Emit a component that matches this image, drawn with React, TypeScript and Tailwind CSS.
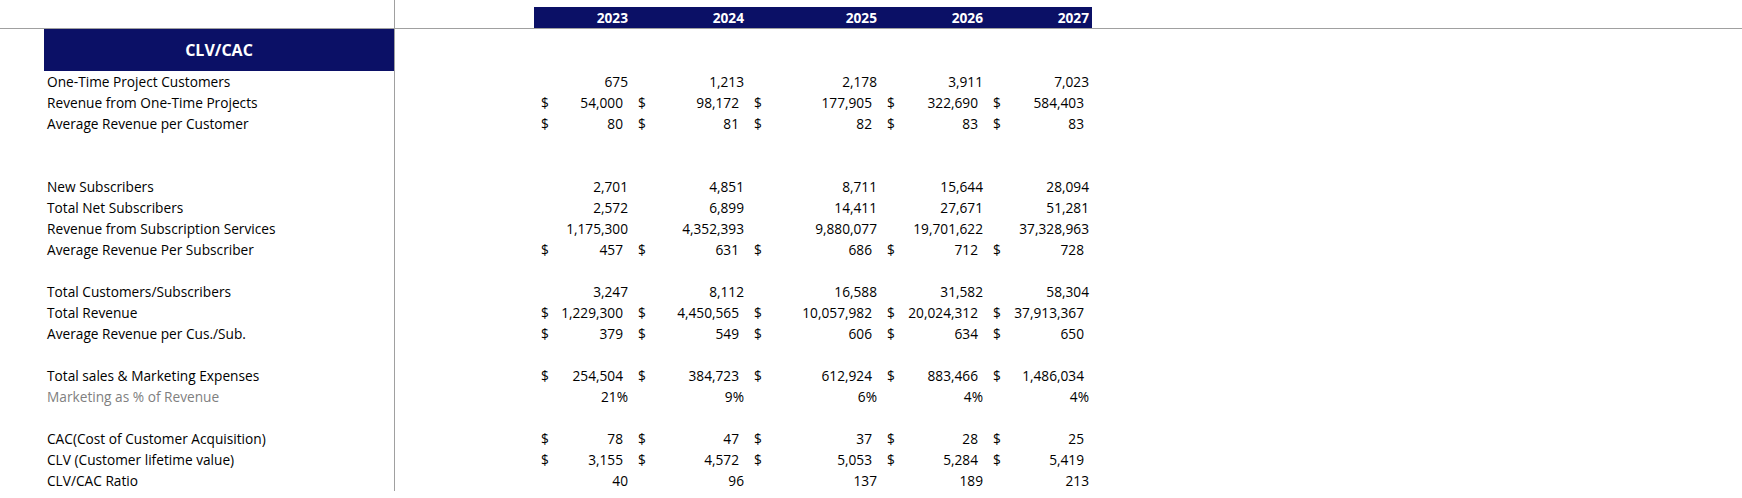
import React from 'react';

type Row = {
  label?: string;
  values?: string[];
  dollar?: boolean;
  muted?: boolean;
};

const years = ['2023', '2024', '2025', '2026', '2027'];

// widths of the five year columns, taken from the sheet
const colWidths = ['w-[97px]', 'w-[116px]', 'w-[133px]', 'w-[106px]', 'w-[106px]'];

const rows: Row[] = [
  { label: 'One-Time Project Customers', values: ['675', '1,213', '2,178', '3,911', '7,023'] },
  { label: 'Revenue from One-Time Projects', values: ['54,000', '98,172', '177,905', '322,690', '584,403'], dollar: true },
  { label: 'Average Revenue per Customer', values: ['80', '81', '82', '83', '83'], dollar: true },
  {},
  {},
  { label: 'New Subscribers', values: ['2,701', '4,851', '8,711', '15,644', '28,094'] },
  { label: 'Total Net Subscribers', values: ['2,572', '6,899', '14,411', '27,671', '51,281'] },
  { label: 'Revenue from Subscription Services', values: ['1,175,300', '4,352,393', '9,880,077', '19,701,622', '37,328,963'] },
  { label: 'Average Revenue Per Subscriber', values: ['457', '631', '686', '712', '728'], dollar: true },
  {},
  { label: 'Total Customers/Subscribers', values: ['3,247', '8,112', '16,588', '31,582', '58,304'] },
  { label: 'Total Revenue', values: ['1,229,300', '4,450,565', '10,057,982', '20,024,312', '37,913,367'], dollar: true },
  { label: 'Average Revenue per Cus./Sub.', values: ['379', '549', '606', '634', '650'], dollar: true },
  {},
  { label: 'Total sales & Marketing Expenses', values: ['254,504', '384,723', '612,924', '883,466', '1,486,034'], dollar: true },
  { label: 'Marketing as % of Revenue', values: ['21%', '9%', '6%', '4%', '4%'], muted: true },
  {},
  { label: 'CAC(Cost of Customer Acquisition)', values: ['78', '47', '37', '28', '25'], dollar: true },
  { label: 'CLV (Customer lifetime value)', values: ['3,155', '4,572', '5,053', '5,284', '5,419'], dollar: true },
  { label: 'CLV/CAC Ratio', values: ['40', '96', '137', '189', '213'] },
];

const SheetRow = ({ row }: { row: Row }) => (
  <div className="flex h-[21px] items-center">
    <div
      className={`w-[395px] h-full flex items-center border-r border-[#a0a0a0] pl-[47px] ${
        row.muted ? 'text-[#7f7f7f]' : 'text-black'
      }`}
    >
      {row.label}
    </div>
    <div className="w-[139px]" />
    {row.values?.map((v, i) => (
      <div key={i} className={`${colWidths[i]} flex items-center justify-between`}>
        <span className="pl-[7px]">{row.dollar ? '$' : ''}</span>
        <span className={row.dollar ? 'pr-[8px]' : 'pr-[3px]'}>{v}</span>
      </div>
    ))}
  </div>
);

export default function App() {
  return (
    <div
      className="w-[1742px] h-[498px] bg-white overflow-hidden text-[13.7px] leading-none text-black"
      style={{ fontFamily: '"Open Sans", "Liberation Sans", sans-serif' }}
    >
      {/* year header */}
      <div className="flex h-[29px] border-b border-[#a0a0a0]">
        <div className="w-[395px] border-r border-[#a0a0a0]" />
        <div className="w-[139px]" />
        <div className="mt-[7px] h-[21px] flex bg-[#0b1066] text-white font-bold">
          {years.map((y, i) => (
            <div key={y} className={`${colWidths[i]} flex items-center justify-end pr-[3px]`}>
              {y}
            </div>
          ))}
        </div>
      </div>

      {/* section title */}
      <div className="flex h-[42px]">
        <div className="w-[395px] border-r border-[#a0a0a0] pl-[44px]">
          <div className="h-full bg-[#0b1066] text-white font-bold text-[16px] flex items-center justify-center">
            CLV/CAC
          </div>
        </div>
      </div>

      {rows.map((row, i) => (
        <SheetRow key={i} row={row} />
      ))}
    </div>
  );
}
